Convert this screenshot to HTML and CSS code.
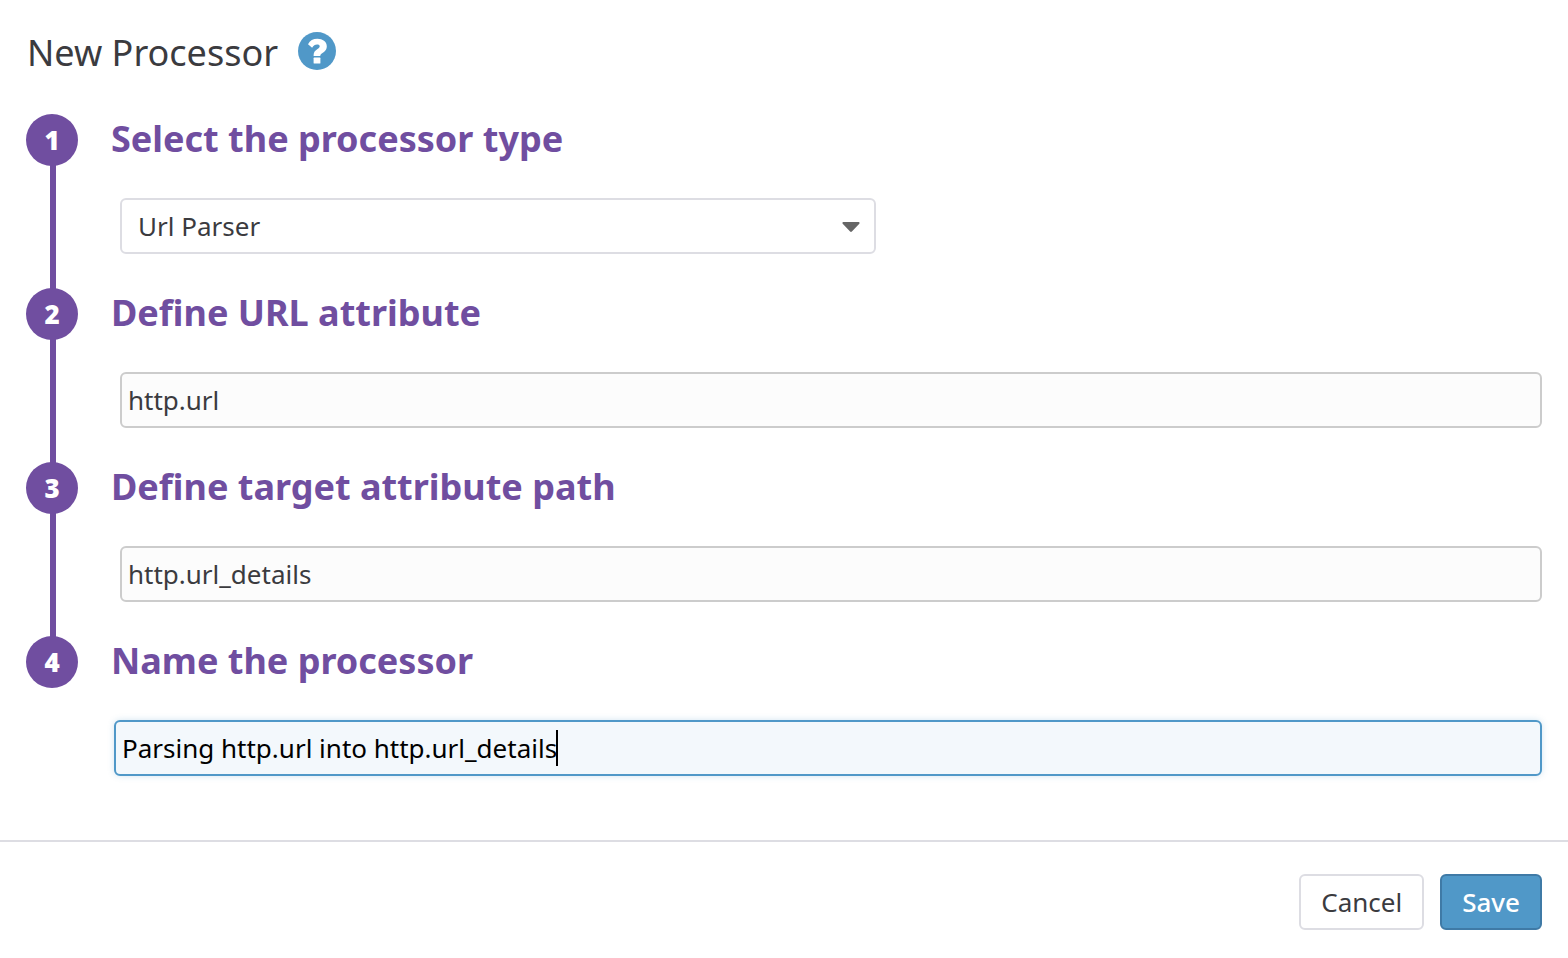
FILE: index.html
```html
<!DOCTYPE html>
<html lang="en">
<head>
<meta charset="utf-8">
<title>New Processor</title>
<link rel="stylesheet" href="styles.css">
</head>
<body>
<form class="dialog">
  <header class="dialog-header">
    <h1 class="dialog-title">New Processor</h1>
    <button class="help" type="button" aria-label="Help">
      <svg viewBox="0 0 38 38" aria-hidden="true">
        <circle cx="19" cy="19" r="19" fill="#5098c8"/>
        <path d="M10 12.200C12 8.600 15 6.800 19.500 6.800c5 0 9.300 2.800 9.300 7.400 0 3.800-2.300 5.400-4.300 6.800-1.700 1.100-2.200 1.600-2.200 3H15.600c-.2-3.700 1.300-5.300 3.600-6.800 1.700-1.100 2.500-1.700 2.500-2.900s-1-1.700-2.600-1.700c-2.200 0-3.500 1.200-5 3.100z" fill="#fff"/>
        <rect x="15.600" y="25.600" width="6.800" height="6" rx=".6" fill="#fff"/>
      </svg>
    </button>
  </header>
  <ol class="steps">
    <li class="step">
      <span class="badge">1</span>
      <div class="step-body">
        <label class="step-title" for="type">Select the processor type</label>
        <div class="select-wrap">
          <select class="field select" id="type"><option>Url Parser</option></select>
          <svg class="caret" viewBox="0 0 18 10" aria-hidden="true"><path d="M1.500 0h15a1 1 0 0 1 .8 1.700L9.900 9.500a1.300 1.300 0 0 1-1.800 0L.7 1.700A1 1 0 0 1 1.500 0z" fill="#666"/></svg>
        </div>
      </div>
    </li>
    <li class="step">
      <span class="badge">2</span>
      <div class="step-body">
        <label class="step-title" for="url">Define URL attribute</label>
        <input class="field input" id="url" type="text" value="http.url">
      </div>
    </li>
    <li class="step">
      <span class="badge">3</span>
      <div class="step-body">
        <label class="step-title" for="target">Define target attribute path</label>
        <input class="field input" id="target" type="text" value="http.url_details">
      </div>
    </li>
    <li class="step">
      <span class="badge">4</span>
      <div class="step-body">
        <label class="step-title" for="name">Name the processor</label>
        <div class="active-wrap">
          <input class="field input active" id="name" type="text" value="Parsing http.url into http.url_details">
          <span class="cursor"></span>
        </div>
      </div>
    </li>
  </ol>
  <footer class="dialog-footer">
    <button class="button" type="button">Cancel</button>
    <button class="button primary" type="submit">Save</button>
  </footer>
</form>
</body>
</html>
```

FILE: styles.css
```css
* {
  box-sizing: border-box;
}

body {
  margin: 0;
  background: #fff;
  color: #3b3b3f;
  font-family: "Noto Sans", "Open Sans", sans-serif;
  font-size: 26px;
}

.dialog-header {
  display: flex;
  align-items: center;
  gap: 20px;
  padding: 26px 27px 34px;
}

.dialog-title {
  margin: 0;
  font-size: 36px;
  font-weight: 400;
  line-height: 54px;
}

.help {
  width: 38px;
  height: 38px;
  margin-bottom: 4px;
  padding: 0;
  border: 0;
  background: none;
}

.help svg {
  display: block;
}

.steps {
  margin: 0;
  padding: 0 26px;
  list-style: none;
}

.step {
  display: flex;
  gap: 33px;
  position: relative;
  padding-bottom: 34px;
}

.step:not(:last-child)::before {
  content: "";
  position: absolute;
  top: 26px;
  bottom: -26px;
  left: 24px;
  width: 6px;
  background: #704ea0;
}

.badge {
  position: relative;
  flex: none;
  width: 52px;
  height: 52px;
  border-radius: 50%;
  background: #704ea0;
  color: #fff;
  font-weight: 900;
  line-height: 52px;
  text-align: center;
}

.step-body {
  flex: 1;
  min-width: 0;
  padding-left: 9px;
}

.step-title {
  display: block;
  margin: 0 0 34px -9px;
  color: #704ea0;
  font-size: 36px;
  font-weight: 700;
  line-height: 50px;
}

.field {
  display: block;
  width: 100%;
  height: 56px;
  margin: 0;
  border: 2px solid #ccc;
  border-radius: 6px;
  outline: 0;
  color: #3b3b3f;
  font: inherit;
}

.select-wrap {
  position: relative;
  width: 53.15%;
}

.select {
  appearance: none;
  padding: 0 48px 0 16px;
  border-color: #dddde3;
  background: #fff;
}

.caret {
  position: absolute;
  top: 24px;
  right: 16px;
  width: 18px;
  height: 10px;
  pointer-events: none;
}

.input {
  padding: 0 6px;
  background: #fcfcfc;
}

.active-wrap {
  position: relative;
  margin-left: -6px;
}

.active {
  border-color: #5098c8;
  background: #f3f8fc;
  box-shadow: 0 0 6px #5098c840;
  color: #000;
}

.cursor {
  position: absolute;
  top: 10px;
  left: 442px;
  width: 2px;
  height: 36px;
  background: #000;
}

.dialog-footer {
  display: flex;
  justify-content: flex-end;
  gap: 16px;
  margin-top: 30px;
  padding: 32px 26px 28px;
  border-top: 2px solid #dddde3;
}

.button {
  height: 56px;
  padding: 0 20px;
  border: 2px solid #dddde3;
  border-radius: 6px;
  background: #fff;
  color: #3b3b3f;
  font: inherit;
}

.primary {
  border-color: #3f7aa6;
  background: #5098c8;
  color: #fff;
  font-weight: 500;
}
```
